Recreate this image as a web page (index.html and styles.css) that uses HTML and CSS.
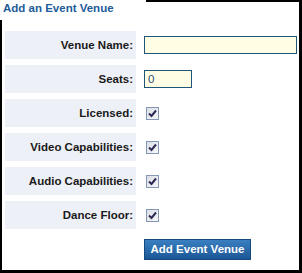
FILE: index.html
```html
<!DOCTYPE html>
<html lang="en">
<head>
  <meta charset="UTF-8">
  <title>Add an Event Venue</title>
  <link rel="stylesheet" href="styles.css">
</head>
<body>
  <div class="panel">
    <div class="panel-title">Add an Event Venue</div>

    <div class="venue-form">
      <label class="field-label" for="venue-name">Venue Name:</label>
      <div class="field"><input type="text" id="venue-name" class="text-input wide"></div>

      <label class="field-label" for="seats">Seats:</label>
      <div class="field"><input type="text" id="seats" class="text-input short" value="0"></div>

      <div class="field-label">Licensed:</div>
      <div class="field"><span class="check"><svg width="9" height="9" viewBox="0 0 9 9"><path d="M1 4.5 L3.5 7 L8 1.5" fill="none" stroke="#2b2b55" stroke-width="2"/></svg></span></div>

      <div class="field-label">Video Capabilities:</div>
      <div class="field"><span class="check"><svg width="9" height="9" viewBox="0 0 9 9"><path d="M1 4.5 L3.5 7 L8 1.5" fill="none" stroke="#2b2b55" stroke-width="2"/></svg></span></div>

      <div class="field-label">Audio Capabilities:</div>
      <div class="field"><span class="check"><svg width="9" height="9" viewBox="0 0 9 9"><path d="M1 4.5 L3.5 7 L8 1.5" fill="none" stroke="#2b2b55" stroke-width="2"/></svg></span></div>

      <div class="field-label">Dance Floor:</div>
      <div class="field"><span class="check"><svg width="9" height="9" viewBox="0 0 9 9"><path d="M1 4.5 L3.5 7 L8 1.5" fill="none" stroke="#2b2b55" stroke-width="2"/></svg></span></div>

      <div class="spacer"></div>
      <div class="actions"><button class="submit-btn">Add Event Venue</button></div>
    </div>
  </div>
</body>
</html>
```
FILE: styles.css
```css
  body {
    margin: 0;
    font-family: 'Liberation Sans', Arial, sans-serif;
    background: #fff;
  }

  .panel {
    width: 297px;
    height: 268px;
    border-top: 2px solid #000;
    border-left: 2px solid #000;
    border-right: 3px solid #000;
    border-bottom: 3px solid #000;
    background: #fff;
  }

  .panel-title {
    margin: -2px 0 0 -2px;
    width: 143px;
    height: 20px;
    padding-left: 3px;
    background: #fff;
    color: #1d5c99;
    font-size: 11.5px;
    font-weight: bold;
    line-height: 16px;
  }

  .venue-form {
    display: grid;
    grid-template-columns: 131px 1fr;
    grid-auto-rows: 28px;
    column-gap: 8px;
    row-gap: 6px;
    padding: 11px 0 0 3px;
  }

  .field-label {
    display: flex;
    align-items: center;
    justify-content: flex-end;
    padding-right: 3px;
    background: #eef0f7;
    color: #1a1a1a;
    font-size: 11.5px;
    font-weight: bold;
  }

  .field {
    display: flex;
    align-items: center;
  }

  .text-input {
    box-sizing: border-box;
    height: 18px;
    margin: 0;
    padding: 0 3px;
    border: 1px solid #1f5577;
    background: #fffde3;
    font-family: 'Liberation Sans', Arial, sans-serif;
    font-size: 11.5px;
    color: #1f4f7a;
    outline: none;
  }

  .wide {
    width: 153px;
  }

  .short {
    width: 48px;
  }

  .check {
    box-sizing: border-box;
    width: 13px;
    height: 13px;
    margin-left: 2px;
    border: 1px solid #8497b5;
    background: linear-gradient(135deg, #dcdfe6 0%, #f6f6f8 100%);
    display: flex;
    align-items: center;
    justify-content: center;
  }

  .actions {
    display: flex;
    align-items: center;
  }

  .submit-btn {
    box-sizing: border-box;
    width: 107px;
    height: 21px;
    margin: 0;
    padding: 0;
    border: 1px solid #164a7e;
    background: linear-gradient(#3a7fc0, #1b5796);
    color: #fff;
    font-family: 'Liberation Sans', Arial, sans-serif;
    font-size: 11.5px;
    font-weight: bold;
    cursor: pointer;
  }
```
